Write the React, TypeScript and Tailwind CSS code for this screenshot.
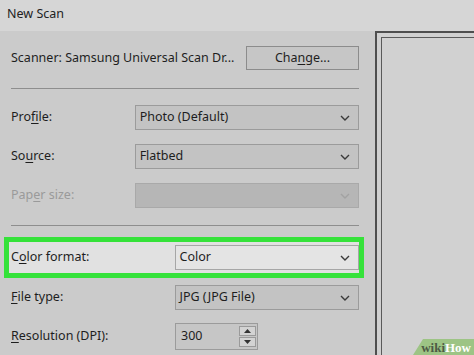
import React from "react";

const font = { fontFamily: '"Noto Sans", "Open Sans", sans-serif' };

const Chevron = ({ color = "#3a3a3a" }: { color?: string }) => (
  <svg width="10" height="6" viewBox="0 0 10 6" className="shrink-0">
    <path d="M1 1 L5 5 L9 1" fill="none" stroke={color} strokeWidth="1.4" />
  </svg>
);

const Label = ({ pre, u, post, disabled }: { pre: string; u: string; post: string; disabled?: boolean }) => (
  <span className={disabled ? "text-[#9a9a9a]" : "text-[#1e1e1e]"}>
    {pre}
    <span className="underline underline-offset-2">{u}</span>
    {post}
  </span>
);

const Select = ({
  value,
  w,
  tone = "normal",
}: {
  value?: string;
  w: string;
  tone?: "normal" | "disabled" | "active";
}) => {
  const box =
    tone === "disabled"
      ? "bg-[#b6b6b6] border-[#a9a9a9]"
      : tone === "active"
        ? "bg-[#e4e4e4] border-[#a6a6a6]"
        : "bg-[#c3c3c3] border-[#9b9b9b]";
  return (
    <div className={`${w} h-[25px] border ${box} flex items-center pl-[4px] pr-[8px]`}>
      <span className="flex-1 text-[#1e1e1e]">{value}</span>
      <Chevron color={tone === "disabled" ? "#a2a2a2" : "#3a3a3a"} />
    </div>
  );
};

export default function App() {
  return (
    <div className="w-[474px] h-[355px] overflow-hidden bg-[#cbcbcb] text-[12.5px] leading-none flex flex-col" style={font}>
      {/* title bar */}
      <div className="h-[31px] shrink-0 bg-[#d6d6d6] flex items-center pl-[7px] pb-[2px] text-[#222]">New Scan</div>

      <div className="flex flex-1">
        {/* left settings pane */}
        <div className="w-[375px] shrink-0 flex flex-col pl-[11px] pr-[16px]">
          <div className="mt-[15px] h-[24px] flex items-center">
            <span className="text-[#1e1e1e]">Scanner: Samsung Universal Scan Dr...</span>
            <button className="ml-auto w-[113px] h-[24px] border border-[#8c8c8c] bg-[#c6c6c6] text-[#1e1e1e]">
              Cha<span className="underline underline-offset-2">n</span>ge...
            </button>
          </div>

          <div className="mt-[18px] h-px bg-[#8e8e8e]" />

          <div className="mt-[16px] flex items-center">
            <div className="w-[124px]"><Label pre="Pro" u="f" post="ile:" /></div>
            <Select value="Photo (Default)" w="w-[225px]" />
          </div>
          <div className="mt-[14px] flex items-center">
            <div className="w-[124px]"><Label pre="So" u="u" post="rce:" /></div>
            <Select value="Flatbed" w="w-[225px]" />
          </div>
          <div className="mt-[14px] flex items-center">
            <div className="w-[124px]"><Label pre="Pap" u="e" post="r size:" disabled /></div>
            <Select w="w-[225px]" tone="disabled" />
          </div>

          <div className="mt-[17px] h-px bg-[#8e8e8e]" />

          {/* highlighted row */}
          <div className="mt-[11px] -ml-[7px] -mr-[5px] border-[5px] border-[#35e23a] bg-[#e1e1e1] h-[41px] flex items-center pl-[2px]">
            <div className="w-[164px]"><Label pre="C" u="o" post="lor format:" /></div>
            <Select value="Color" w="w-[185px]" tone="active" />
          </div>

          <div className="mt-[7px] flex items-center">
            <div className="w-[164px]"><Label pre="" u="F" post="ile type:" /></div>
            <Select value="JPG (JPG File)" w="w-[185px]" />
          </div>

          <div className="mt-[13px] flex items-center">
            <div className="w-[164px]"><Label pre="" u="R" post="esolution (DPI):" /></div>
            <div className="w-[83px] h-[27px] border border-[#9b9b9b] bg-[#c6c6c6] flex items-center pl-[5px] pr-[1px]">
              <span className="flex-1 text-[#1e1e1e]">300</span>
              <div className="flex flex-col gap-px">
                <div className="w-[17px] h-[10px] border border-[#9a9a9a] bg-[#d3d3d3] flex items-center justify-center">
                  <svg width="7" height="4" viewBox="0 0 7 4"><path d="M0 4 L3.5 0 L7 4Z" fill="#333" /></svg>
                </div>
                <div className="w-[17px] h-[10px] border border-[#9a9a9a] bg-[#d3d3d3] flex items-center justify-center">
                  <svg width="7" height="4" viewBox="0 0 7 4"><path d="M0 0 L3.5 4 L7 0Z" fill="#333" /></svg>
                </div>
              </div>
            </div>
          </div>
        </div>

        {/* preview panel */}
        <div className="flex-1 relative border-t-2 border-l-2 border-[#4e4e4e] bg-[#d0d0d0] pt-[4px] pl-[4px]">
          <div className="h-full border-t border-l border-[#5a5a5a] bg-[#d1d1d1]" />
          <div
            className="absolute right-0 bottom-0 h-[16px] w-[61px] bg-[#9dc485] flex items-center justify-end pr-[3px] font-bold text-[13px]"
            style={{ fontFamily: '"Liberation Serif", serif', clipPath: "polygon(10px 0, 100% 0, 100% 100%, 0 100%)" }}
          >
            <span className="text-[#4d5a44]">wiki</span>
            <span className="text-white">How</span>
          </div>
        </div>
      </div>
    </div>
  );
}
